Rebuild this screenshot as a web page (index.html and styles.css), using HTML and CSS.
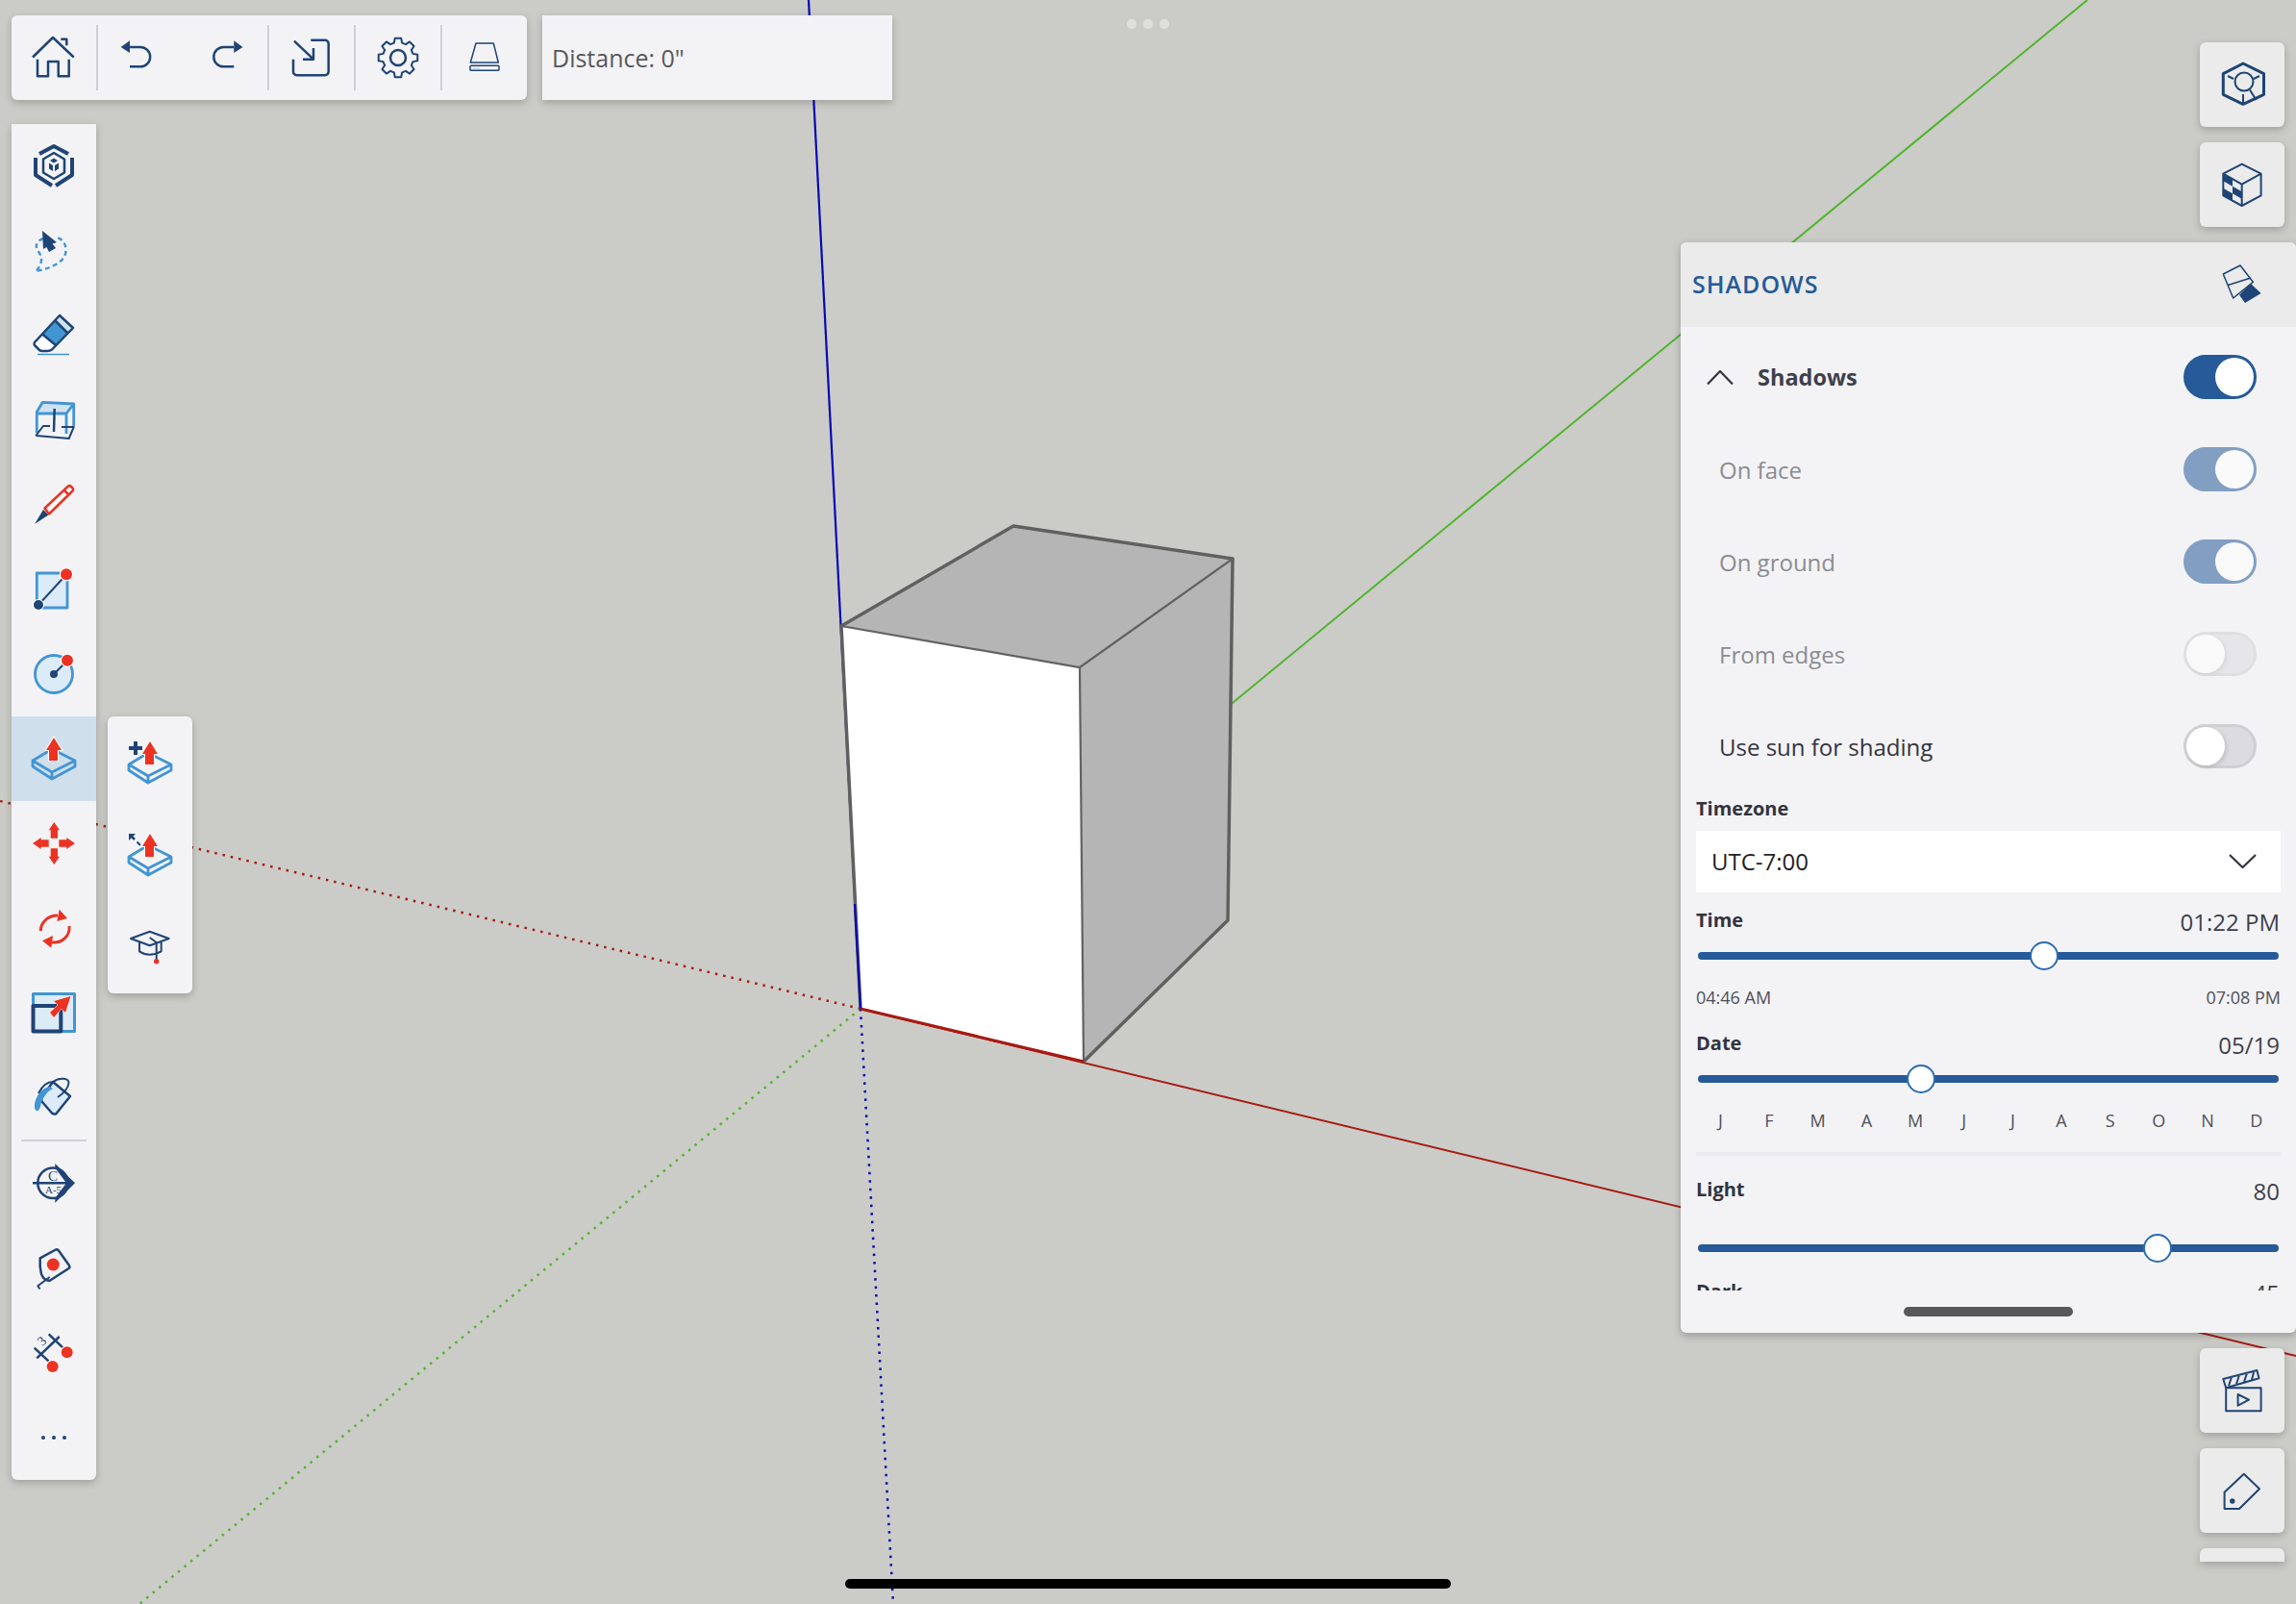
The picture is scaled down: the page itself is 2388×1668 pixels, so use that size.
FILE: index.html
```html
<!DOCTYPE html>
<html>
<head>
    <meta charset="utf-8">
    <title>Shadows</title>
    <link rel="stylesheet" href="styles.css">
</head>
<body>
<svg width="0" height="0" class="defs">
    <symbol id="pushpull" viewBox="0 0 48 48">
        <path class="ln-blue" d="M2 26L22 14L46 26L22 38ZM2 26V32L22 45L46 32V26M22 38V45"/>
        <polygon class="fill-red halo" points="24,2 32,15 28,15 28,26 19,26 19,15 16,15"/>
    </symbol>
</svg>

<div class="app">
    <!-- model view -->
    <svg class="scene" width="2388" height="1668" viewBox="0 0 2388 1668">
        <line class="axis-red" x1="895" y1="1049" x2="2388" y2="1410"/>
        <line class="axis-green" x1="895" y1="1049" x2="2171" y2="0"/>
        <line class="axis-blue" x1="841" y1="0" x2="895" y2="1049"/>
        <line class="axis-red dotted" x1="895" y1="1049" x2="0" y2="833"/>
        <line class="axis-green dotted" x1="895" y1="1049" x2="145" y2="1668"/>
        <line class="axis-blue dotted" x1="895" y1="1049" x2="929" y2="1668"/>
        <polygon class="face-grey" points="875,651 1054,547 1282,581 1123,694"/>
        <polygon class="face-grey" points="1123,694 1282,581 1277,957 1127,1104"/>
        <polygon class="face-white" points="875,651 1123,694 1127,1104 895,1049"/>
        <path class="edge-thin" d="M875 651L1123 694L1282 581M1123 694L1127 1104"/>
        <path class="edge" d="M895 1049L875 651L1054 547L1282 581L1277 957L1127 1104"/>
        <line class="axis-blue" x1="889" y1="940" x2="895" y2="1049"/>
        <line class="axis-red thick" x1="895" y1="1049" x2="1127" y2="1104"/>
    </svg>

    <div class="top-dots"><span></span><span></span><span></span></div>

    <div class="topbar">
        <div class="toolbar">
            <div class="tool"><svg class="icon" viewBox="1 0 48 48"><path class="ln-dark" d="M3 23.5L24 3L45.7 23.5M32.3 4.7H38.3V11.3M8 25.7V43.3H19V28H29.7V43.3H40.7V25.7"/></svg></div>
            <div class="sep"></div>
            <div class="tool-pair">
                <svg class="icon" viewBox="0 0 48 48"><polygon class="fill-dark" points="8.7,13 18,6.3 18,19"/><path class="ln-dark" d="M18 13H29A10 10 0 0 1 29 33.3H18"/></svg>
                <svg class="icon" viewBox="0 0 48 48"><polygon class="fill-dark" points="39.5,13 30.3,6.3 30.3,19"/><path class="ln-dark" d="M30.3 13H19.5A10 10 0 0 0 19.5 33.3H30.3"/></svg>
            </div>
            <div class="sep"></div>
            <div class="tool"><svg class="icon" viewBox="0 0 48 48"><path class="ln-dark" d="M23.3 5.7H38A3.7 3.7 0 0 1 41.7 9.4V38.6A3.7 3.7 0 0 1 38 42.3H8.7A3.7 3.7 0 0 1 5 38.6V25.7M6 6.7L26 25.7M15 25.7H26V14"/></svg></div>
            <div class="sep"></div>
            <div class="tool"><svg class="icon" viewBox="0 0 48 48"><g transform="translate(24 24)"><polygon class="ln-dark thin" points="-4.14,-15.45 -3.21,-20.25 3.21,-20.25 4.14,-15.45 8,-13.86 12.05,-16.58 16.58,-12.05 13.86,-8 15.45,-4.14 20.25,-3.21 20.25,3.21 15.45,4.14 13.86,8 16.58,12.05 12.05,16.58 8,13.86 4.14,15.45 3.21,20.25 -3.21,20.25 -4.14,15.45 -8,13.86 -12.05,16.58 -16.58,12.05 -13.86,8 -15.45,4.14 -20.25,3.21 -20.25,-3.21 -15.45,-4.14 -13.86,-8 -16.58,-12.05 -12.05,-16.58 -8,-13.86"/><circle class="ln-dark" r="8"/></g></svg></div>
            <div class="sep"></div>
            <div class="tool"><svg class="icon" viewBox="0 0 48 48"><path class="ln-dark hair-dark" d="M15 9H33.3L38.3 29H9.3Z"/><rect class="ln-dark hair-dark" x="9" y="32.3" width="30" height="5" rx="1"/><rect class="fill-pale" x="12" y="34" width="7" height="2"/></svg></div>
        </div>
        <div class="measure">Distance: 0"</div>
    </div>

    <div class="sidebar">
        <div class="tool-row">
            <div class="tile"><svg class="icon" viewBox="0 0 48 48"><path class="ln-dark heavy" d="M9 11L24 3L39 11M5 15V33L22 44M43 15V33L26 44"/><path class="ln-dark" d="M24 10L35 16.5V30.5L24 37L13 30.5V16.5Z"/><path class="fill-dark" d="M24 15.5L28 18L24 20.5L20 18ZM19 20.5L23 23V29L19 26.5ZM29 20.5L25 23V29L29 26.5Z"/></svg></div>
            <div class="tile"><svg class="icon" viewBox="0 0 48 48"><path class="ln-blue dash" d="M13 11C7 13 4 18 7 23C9 26 11 29 11 33C11 38 8 43 4.7 45C12 44 18 42 24 39C32 35 37 30 36.5 22C36 15 32 11 27 10"/><polygon class="fill-dark" points="12,3 27,15 22.5,16.5 26,21 19,25 16.5,20 13,22"/></svg></div>
            <div class="tile"><svg class="icon" viewBox="0 0 48 48"><path class="fill-white" d="M4 31L11.5 22L26 34L22 38.5Q20 40 17 40H12Q10 40 9 39L4 34Z"/><polygon class="fill-blue" points="25,8 38.5,21.5 26,34 11.5,22"/><polygon class="fill-pale" points="30,3 44,16 38.5,21.5 25,8"/><path class="ln-dark" d="M30 3L44 16L22 38.5Q20 40 17 40H12Q10 40 9 39L4 34Q3 33 4 31ZM25 8L38.5 21.5M11.5 22L26 34"/><line class="ln-blue hair" x1="7" y1="43.5" x2="40" y2="43.5"/></svg></div>
            <div class="tile"><svg class="icon" viewBox="0 0 48 48"><polygon class="fill-pale" points="6.3,15.3 12.3,5.3 44.7,7 37,17"/><path class="ln-blue" d="M6.3 37V15.3L12.3 5.3L44.7 7L37 17H6.3M37 17V38M44.7 7V30"/><path class="ln-dark thin" d="M5.3 40L13 30H20M32 31H44.7L39.7 43L5.3 40"/><line class="ln-dark" x1="24.7" y1="12" x2="24" y2="36"/></svg></div>
            <div class="tile"><svg class="icon" viewBox="0 0 48 48"><polygon class="fill-dark" points="4,44 13,29 18.5,34.5"/><path class="ln-red fill-white" d="M14.5 27.5L39 4.5Q40.5 3.5 42 5L43.5 6.5Q44.8 8 43.5 9.5L19 33.5Z"/><line class="ln-red" x1="34.5" y1="8.5" x2="39.5" y2="13.5"/></svg></div>
            <div class="tile"><svg class="icon" viewBox="0 0 48 48"><rect class="ln-blue fill-soft" x="6.3" y="7" width="31.7" height="36"/><line class="ln-dark thin" x1="8" y1="40" x2="37" y2="8.5"/><circle class="fill-dark halo" cx="8" cy="40" r="5"/><circle class="fill-red halo" cx="37" cy="8.3" r="6"/></svg></div>
            <div class="tile"><svg class="icon" viewBox="0 0 48 48"><circle class="ln-blue fill-soft" cx="24" cy="24" r="19.5"/><line class="ln-dark thin" x1="24" y1="24" x2="38" y2="10"/><circle class="fill-dark" cx="24" cy="24" r="4"/><circle class="fill-red halo" cx="38" cy="9.7" r="6"/></svg></div>
            <div class="tile active"><svg class="icon"><use href="#pushpull"/></svg></div>
            <div class="tile"><svg class="icon" viewBox="0 0 48 48"><path class="fill-red" d="M24.3 2L30 10.3H28V18.7H20.7V10.3H18.7ZM24.3 46L30 37.7H28V29.3H20.7V37.7H18.7ZM2 24L10.7 18V20.3H18.7V27.7H10.7V30ZM46 24L37.3 18V20.3H29.3V27.7H37.3V30Z"/></svg></div>
            <div class="tile"><svg class="icon" viewBox="0 0 48 48"><path class="ln-red med" d="M10.3 27C10.3 19 17 11 28 11M40 22C41 32 33 40 22 39"/><polygon class="fill-red" points="29.7,4.7 38,14 27.3,17"/><polygon class="fill-red" points="21.3,44.7 12,37.3 23,32"/></svg></div>
            <div class="tile"><svg class="icon" viewBox="0 0 48 48"><rect class="ln-blue fill-soft heavy-blue" x="2.5" y="4.5" width="43" height="39"/><path class="ln-dark heavy" d="M31.3 17H2.5V43.5H31.3Z"/><polygon class="fill-red halo-thin" points="41.5,7 36,24 32,20 24,29 20,24 28,16 24,12"/></svg></div>
            <div class="tile"><svg class="icon" viewBox="0 0 48 48"><path class="ln-dark fill-soft" d="M11.3 24.7L23 8L41 23L26.3 41.3Q24 42 22 40.5L12 29Q10.5 27 11.3 24.7Z"/><path class="ln-dark thin" d="M23 8C30 3 40 4 39.5 9C39 14 34 20 28 24M8 20C12 12 18 8 23 8"/><path class="fill-blue" d="M20 13C13 14 8 19 5 27C3 33 4 37 6 38C8 39 9.5 36 10.5 32C12 24 17 18 23 15Z"/></svg></div>
            <div class="rule"></div>
            <div class="tile"><svg class="icon" viewBox="0 0 48 48"><circle class="ln-dark" cx="23" cy="23.3" r="15.7"/><polygon class="fill-dark" points="25.3,3 46,23.3 25.3,43.7 25.3,39 37,23.3 25.3,7.5"/><line class="ln-dark" x1="2" y1="23.3" x2="40" y2="23.3"/><text class="glyph" x="23" y="21" text-anchor="middle">C</text><text class="glyph small" x="23.5" y="33.5" text-anchor="middle">A-5</text></svg></div>
            <div class="tile"><svg class="icon" viewBox="0 0 48 48"><path class="ln-dark" d="M9.7 13.3L26 4.5Q28 4 29 5.5L40 21Q41 23 39.5 24L19.7 36.7Q14 37 11 30Q9 22 9.7 13.3Z"/><path class="ln-dark thin" d="M19.7 33L7.3 42.3L9.5 45.5"/><circle class="fill-red" cx="23.3" cy="20" r="6.5"/></svg></div>
            <div class="tile"><svg class="icon" viewBox="0 0 48 48"><path class="ln-dark" d="M3.7 18.7L18.7 32.7M18.7 4.3L33.3 18.3M6.3 29.3L29.7 7"/><text class="glyph tilt" x="12" y="16" text-anchor="middle" transform="rotate(-45 12 12)">3</text><circle class="fill-red halo" cx="37.7" cy="23.3" r="6"/><circle class="fill-red halo" cx="22.7" cy="38" r="6"/></svg></div>
            <div class="tile"><svg class="icon" viewBox="0 0 48 48"><circle class="fill-dark" cx="13" cy="24" r="2"/><circle class="fill-dark" cx="24" cy="24" r="2"/><circle class="fill-dark" cx="35" cy="24" r="2"/></svg></div>
        </div>
    </div>

    <div class="flyout">
        <div class="fly-tile"><svg class="icon" viewBox="0 0 48 48"><use href="#pushpull"/><path class="ln-dark heavy" d="M2 9H16M9 2V16"/></svg></div>
        <div class="fly-tile"><svg class="icon" viewBox="0 0 48 48"><use href="#pushpull"/><line class="ln-dark" x1="3" y1="3" x2="8" y2="8"/><path class="fill-dark" d="M2 2H9L2 9Z"/><line class="ln-dark thin" x1="10.5" y1="10.5" x2="14" y2="14"/></svg></div>
        <div class="fly-tile"><svg class="icon" viewBox="0 0 48 48"><path class="ln-dark thin" d="M4 15L23.7 7.7L43.7 15L23.7 22.3ZM13 19V28.3Q23 35 35.7 28.3V19M23.7 14L30.7 19V37"/><circle class="fill-red" cx="30.7" cy="38.7" r="2.7"/></svg></div>
    </div>

    <div class="side-buttons upper">
        <div class="side-btn"><svg class="icon" viewBox="0 0 48 48"><path class="ln-dark heavy-ish" d="M25 2L46.5 12.7V34.3L25 44.3L4.3 34.3V12.7Z"/><circle class="ln-dark thin" cx="26" cy="21" r="9.5"/><path class="ln-dark thin" d="M32 29.5L38.6 40M9 15L15 18M42 15L36 18M25 34V44"/></svg></div>
        <div class="side-btn"><svg class="icon" viewBox="0 0 48 48"><path class="ln-dark thin" d="M23.7 2.7L43.6 12.7V35.3L23.7 46L4.3 35.3V12.7ZM4.3 12.7L23.7 23.7L43.6 12.7M23.7 23.7V46"/><path class="fill-dark" d="M4.3 12.7L14 18.2V25.7L4.3 20.2ZM14 25.7L23.7 31.2V38.7L14 33.2ZM4.3 27.8L14 33.2V40.8L4.3 35.3Z"/></svg></div>
    </div>

    <div class="panel">
        <div class="panel-head">
            <span class="panel-title">SHADOWS</span>
            <svg class="icon" viewBox="0 0 48 48"><path class="ln-dark hair-dark" d="M4.3 13L22 4L35.3 21.3L14.7 38ZM8.5 24.7L33 17"/><polygon class="fill-dark" points="33,23 43.6,33 27,43 21,34.7"/></svg>
        </div>
        <div class="panel-body">
            <div class="row first">
                <svg class="chevron" width="28" height="15" viewBox="0 0 28 15"><path d="M1 14.5L14 1L27 14.5"/></svg>
                <span class="row-title">Shadows</span>
                <span class="toggle on"><i></i></span>
            </div>
            <div class="row disabled"><span class="row-text">On face</span><span class="toggle on"><i></i></span></div>
            <div class="row disabled"><span class="row-text">On ground</span><span class="toggle on"><i></i></span></div>
            <div class="row disabled"><span class="row-text">From edges</span><span class="toggle"><i></i></span></div>
            <div class="row"><span class="row-text">Use sun for shading</span><span class="toggle"><i></i></span></div>

            <div class="field-label tz">Timezone</div>
            <div class="select">
                <span>UTC-7:00</span>
                <svg class="chevron" width="29" height="15" viewBox="0 0 29 15"><path d="M1 1L14.5 14L28 1"/></svg>
            </div>

            <div class="value-row time"><span class="field-label">Time</span><span class="value">01:22 PM</span></div>
            <div class="slider"><div class="track"><span class="thumb" style="left: 59.6%"></span></div></div>
            <div class="range-row"><span>04:46 AM</span><span>07:08 PM</span></div>

            <div class="value-row date"><span class="field-label">Date</span><span class="value">05/19</span></div>
            <div class="slider"><div class="track"><span class="thumb" style="left: 38.4%"></span></div></div>
            <div class="months">
                <span>J</span><span>F</span><span>M</span><span>A</span><span>M</span><span>J</span><span>J</span><span>A</span><span>S</span><span>O</span><span>N</span><span>D</span>
            </div>
            <div class="divider"></div>

            <div class="value-row light"><span class="field-label">Light</span><span class="value">80</span></div>
            <div class="slider spaced"><div class="track"><span class="thumb" style="left: 79.1%"></span></div></div>
            <div class="value-row dark"><span class="field-label">Dark</span><span class="value">45</span></div>
        </div>
        <div class="panel-foot"><div class="handle"></div></div>
    </div>

    <div class="side-buttons lower">
        <div class="side-btn"><svg class="icon" viewBox="0 0 48 48"><rect class="ln-dark thin" x="7.2" y="21.3" width="36.4" height="24"/><polygon class="ln-dark thin" points="19.6,28 31,33.7 19.6,39.7"/><path class="ln-dark thin" d="M4.3 12L39.4 3L41.5 11.3L7.2 21.3ZM10 19L13 10M18 17L21 8M26 15L29 6M34 13L36 5"/></svg></div>
        <div class="side-btn"><svg class="icon" viewBox="0 0 48 48"><path class="ln-dark thin" d="M25.8 6.7L42 22.3L21 43H5.6V25.7Z"/><circle class="fill-dark" cx="13.8" cy="35" r="2.7"/></svg></div>
        <div class="side-btn cut"></div>
    </div>

    <div class="home-bar"></div>
</div>
</body>
</html>
```

FILE: styles.css
```css
* {
    box-sizing: border-box;
}
body {
    margin: 0;
    font-family: "Open Sans", "Noto Sans", sans-serif;
    background: #cbccc7;
    overflow: hidden;
}
.defs {
    position: absolute;
}
.app {
    position: relative;
    width: 2388px;
    height: 1668px;
    overflow: hidden;
    background: #cbccc7;
}
.scene {
    position: absolute;
    top: 0;
    left: 0;
}
.axis-red { stroke: #a81a12; stroke-width: 2; }
.axis-red.thick { stroke-width: 3; }
.axis-green { stroke: #4fb52d; stroke-width: 2; }
.axis-blue { stroke: #0808b4; stroke-width: 2.2; }
.dotted { stroke-width: 2.5; stroke-dasharray: 2.5 6; }
.face-grey { fill: #b5b5b5; }
.face-white { fill: #fff; }
.edge { fill: none; stroke: #606060; stroke-width: 3.5; stroke-linejoin: round; }
.edge-thin { fill: none; stroke: #626262; stroke-width: 2.2; }

.top-dots {
    position: absolute;
    top: 20px;
    left: 1172px;
    display: flex;
    gap: 7px;
}
.top-dots span {
    width: 10px;
    height: 10px;
    border-radius: 50%;
    background: #dfdfdb;
}

.topbar {
    position: absolute;
    top: 16px;
    left: 12px;
    display: flex;
    gap: 16px;
}
.toolbar {
    display: flex;
    align-items: center;
    height: 88px;
    background: #f3f3f6;
    border-radius: 6px;
    box-shadow: 0 3px 8px rgba(0,0,0,0.22);
}
.tool {
    width: 88px;
    display: flex;
    justify-content: center;
}
.tool-pair {
    width: 176px;
    display: flex;
    gap: 48px;
    padding-left: 15px;
}
.sep {
    width: 2px;
    height: 68px;
    background: #cfcfd5;
}
.measure {
    width: 364px;
    height: 88px;
    display: flex;
    align-items: center;
    padding-left: 10px;
    font-size: 25px;
    color: #58585a;
    background: #f3f3f6;
    box-shadow: 0 3px 8px rgba(0,0,0,0.22);
}
.icon {
    width: 48px;
    height: 48px;
    flex: none;
    overflow: visible;
}

.ln-dark { fill: none; stroke: #1f4475; stroke-width: 2.5; stroke-linejoin: round; }
.ln-dark.thin { stroke-width: 2; }
.ln-dark.heavy { stroke-width: 4; }
.ln-dark.heavy-ish { stroke-width: 3; }
.ln-dark.hair-dark { stroke-width: 1.5; }
.ln-dark.fill-soft { fill: #dcebf8; }
.ln-blue { fill: none; stroke: #4295d3; stroke-width: 2.8; stroke-linejoin: round; }
.ln-blue.fill-soft { fill: #dcebf8; }
.ln-blue.dash { stroke-width: 2.4; stroke-dasharray: 5 3.5; }
.ln-blue.hair { stroke-width: 1.5; }
.ln-blue.heavy-blue { stroke-width: 3; }
.ln-red { fill: none; stroke: #ec3323; stroke-width: 2.5; stroke-linejoin: round; }
.ln-red.fill-white { fill: #fff; }
.ln-red.med { stroke-width: 3; }
.fill-dark { fill: #1f4475; }
.fill-red { fill: #ec3323; }
.fill-blue { fill: #4295d3; }
.fill-pale { fill: #cfe2f3; }
.fill-soft { fill: #dcebf8; }
.fill-white { fill: #fff; }
.halo { stroke: #fff; stroke-width: 2.2; paint-order: stroke; }
.halo-thin { stroke: #fff; stroke-width: 1; paint-order: stroke; }
.glyph {
    font-family: "Liberation Serif", serif;
    font-size: 15px;
    fill: #1f4475;
}
.glyph.small { font-size: 11px; }
.glyph.tilt { font-size: 14px; }

.sidebar {
    position: absolute;
    top: 129px;
    left: 12px;
    width: 88px;
    background: #f3f3f6;
    border-radius: 0 0 6px 6px;
    box-shadow: 0 3px 8px rgba(0,0,0,0.22);
}
.tool-row {
    display: flex;
    flex-direction: column;
}
.tile {
    height: 88px;
    display: flex;
    align-items: center;
    justify-content: center;
}
.tile.active {
    background: #cfdfec;
}
.rule {
    height: 2px;
    margin: 0 10px;
    background: #d2d2d6;
}

.flyout {
    position: absolute;
    top: 745px;
    left: 112px;
    width: 88px;
    background: #f3f3f6;
    border-radius: 6px;
    box-shadow: 0 3px 8px rgba(0,0,0,0.22);
}
.fly-tile {
    height: 96px;
    display: flex;
    align-items: center;
    justify-content: center;
}

.side-buttons {
    position: absolute;
    left: 2288px;
    display: flex;
    flex-direction: column;
    gap: 16px;
}
.side-buttons.upper { top: 44px; }
.side-buttons.lower { top: 1402px; }
.side-btn {
    width: 88px;
    height: 88px;
    display: flex;
    align-items: center;
    justify-content: center;
    background: #ebebeb;
    border-radius: 6px;
    box-shadow: 0 3px 8px rgba(0,0,0,0.22);
}
.side-btn.cut {
    height: 14px;
    border-radius: 6px 6px 0 0;
}

.panel {
    position: absolute;
    top: 252px;
    left: 1748px;
    width: 640px;
    height: 1134px;
    display: flex;
    flex-direction: column;
    background: #f3f3f6;
    border-radius: 6px;
    box-shadow: 0 3px 8px rgba(0,0,0,0.25);
    overflow: hidden;
}
.panel-head {
    height: 88px;
    flex: none;
    display: flex;
    align-items: center;
    justify-content: space-between;
    padding: 0 32px 0 12px;
    background: #ebebeb;
}
.panel-title {
    font-size: 25px;
    font-weight: 600;
    letter-spacing: 1px;
    line-height: 30px;
    padding-bottom: 2px;
    color: #265a98;
}
.panel-body {
    height: 1002px;
    flex: none;
    padding: 4px 16px 0;
    overflow: hidden;
}
.row {
    height: 96px;
    display: flex;
    align-items: center;
    justify-content: space-between;
    padding: 0 25px 0 24px;
    font-size: 24px;
    color: #33333f;
}
.row.first {
    justify-content: flex-start;
    padding-left: 11px;
}
.row.first .toggle {
    margin-left: auto;
}
.row-title {
    margin-left: 25px;
    font-weight: 700;
    font-size: 23.5px;
    color: #3f3f4b;
}
.row.disabled .row-text {
    color: #8c8c90;
}
.row.disabled .toggle {
    opacity: 0.55;
}
.chevron {
    flex: none;
}
.chevron path {
    fill: none;
    stroke: #35353f;
    stroke-width: 2.2;
}
.toggle {
    position: relative;
    width: 76px;
    height: 46px;
    display: block;
    border-radius: 23px;
    background: #dcdce0;
    border: 3px solid #d0d0d3;
}
.toggle i {
    position: absolute;
    top: 0;
    left: 0;
    width: 40px;
    height: 40px;
    border-radius: 50%;
    background: #fff;
    box-shadow: 2px 2px 4px rgba(0,0,0,0.12);
}
.toggle.on {
    background: #265a98;
    border-color: #265a98;
}
.toggle.on i {
    left: 30px;
    box-shadow: none;
}
.field-label {
    font-size: 20px;
    font-weight: 700;
    color: #33333f;
}
.value-row .field-label {
    padding-bottom: 4px;
}
.field-label.tz {
    height: 40px;
    line-height: 34px;
}
.select {
    height: 64px;
    display: flex;
    align-items: center;
    justify-content: space-between;
    padding: 0 25px 2px 16px;
    font-size: 24px;
    color: #1e1e24;
    background: #fff;
}
.value-row {
    height: 32px;
    display: flex;
    align-items: center;
    justify-content: space-between;
    margin-right: 1px;
}
.value {
    font-size: 24px;
    color: #3f3f4b;
}
.value-row.time { margin-top: 14px; }
.value-row.date { margin-top: 20px; }
.value-row.light { margin-top: 20px; }
.value-row.dark { margin-top: 10px; }
.slider {
    height: 40px;
    display: flex;
    align-items: center;
    padding: 0 2px;
}
.slider.spaced {
    margin-top: 24px;
}
.track {
    position: relative;
    width: 100%;
    height: 8px;
    border-radius: 4px;
    background: #265a98;
}
.thumb {
    position: absolute;
    top: -11px;
    width: 30px;
    height: 30px;
    margin-left: -15px;
    border-radius: 50%;
    background: #fff;
    border: 2px solid #2b6cb0;
}
.range-row {
    height: 26px;
    margin-top: 10px;
    display: flex;
    align-items: center;
    justify-content: space-between;
    font-size: 18px;
    color: #4f4f58;
}
.months {
    height: 26px;
    margin-top: 10px;
    display: grid;
    grid-template-columns: repeat(12, 1fr);
    font-size: 18px;
    line-height: 26px;
    text-align: center;
    color: #4f4f58;
}
.divider {
    height: 4px;
    margin-top: 20px;
    background: #ebebef;
}
.panel-foot {
    flex: 1;
    display: flex;
    justify-content: center;
    padding-top: 17px;
}
.handle {
    width: 176px;
    height: 10px;
    border-radius: 5px;
    background: #58585a;
}

.home-bar {
    position: absolute;
    left: 879px;
    top: 1642px;
    width: 630px;
    height: 10px;
    border-radius: 5px;
    background: #000;
}
```
